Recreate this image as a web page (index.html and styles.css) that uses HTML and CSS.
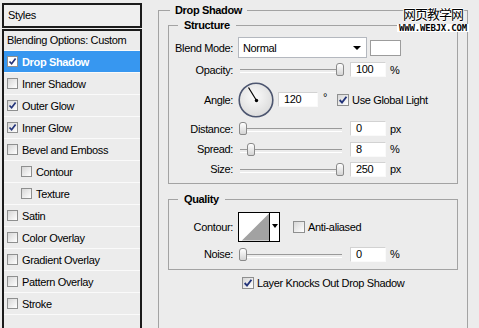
FILE: index.html
```html
<!DOCTYPE html>
<html lang="en-US">
  <head>
    <meta charset='utf-8'>
    <title>Layer Style - Drop Shadow</title>
<link rel="stylesheet" href="styles.css">
</head>
<body>

<div class="window">

  <!-- Style list -->
  <aside class="stylepane">
    <div class="styleshead">Styles</div>
    <ul class="stylelist">
      <li class="blendrow">Blending Options: Custom</li>
      <li class="stylerow selected"><span class="check on"><svg viewBox="0 0 9 9"><path d="M1.5 4.5 L3.6 6.8 L7.6 1.6"/></svg></span>Drop Shadow</li>
      <li class="stylerow"><span class="check"></span>Inner Shadow</li>
      <li class="stylerow"><span class="check on"><svg viewBox="0 0 9 9"><path d="M1.5 4.5 L3.6 6.8 L7.6 1.6"/></svg></span>Outer Glow</li>
      <li class="stylerow"><span class="check on"><svg viewBox="0 0 9 9"><path d="M1.5 4.5 L3.6 6.8 L7.6 1.6"/></svg></span>Inner Glow</li>
      <li class="stylerow"><span class="check"></span>Bevel and Emboss</li>
      <li class="stylerow sub"><span class="check"></span>Contour</li>
      <li class="stylerow sub"><span class="check"></span>Texture</li>
      <li class="stylerow"><span class="check"></span>Satin</li>
      <li class="stylerow"><span class="check"></span>Color Overlay</li>
      <li class="stylerow"><span class="check"></span>Gradient Overlay</li>
      <li class="stylerow"><span class="check"></span>Pattern Overlay</li>
      <li class="stylerow"><span class="check"></span>Stroke</li>
      <li class="stylerow"></li>
    </ul>
  </aside>

  <!-- Options -->
  <section class="options">
    <fieldset class="group outer">
      <legend>Drop Shadow</legend>

      <fieldset class="group structure">
        <legend>Structure</legend>
        <div class="row blend">
          <span class="lbl">Blend Mode:</span>
          <div class="select">Normal<span class="arrow"></span></div>
          <div class="swatch"></div>
        </div>
        <div class="row r-opacity">
          <span class="lbl">Opacity:</span>
          <div class="slider"><span class="thumb" style="left:102px"></span></div>
          <div class="field">100</div><span class="unit">%</span>
        </div>
        <div class="row r-angle">
          <span class="lbl">Angle:</span>
          <svg class="dial" width="36" height="36" viewBox="0 0 36 36">
            <defs>
              <radialGradient id="dialfill" cx="45%" cy="40%" r="60%">
                <stop offset="0" stop-color="#fbfbfb"/>
                <stop offset="1" stop-color="#dcdcdc"/>
              </radialGradient>
            </defs>
            <circle cx="18" cy="18" r="16.8" fill="url(#dialfill)" stroke="#4d5670" stroke-width="1.6"/>
            <line x1="18.5" y1="18.5" x2="10.5" y2="5.5" stroke="#000" stroke-width="1.2"/>
            <circle cx="18.5" cy="18.5" r="1.7" fill="#000"/>
          </svg>
          <div class="field angle">120</div><span class="deg">&deg;</span>
          <span class="check big on"><svg viewBox="0 0 9 9"><path d="M1.5 4.5 L3.6 6.8 L7.6 1.6"/></svg></span>
          <span class="cblabel">Use Global Light</span>
        </div>
        <div class="row r-distance">
          <span class="lbl">Distance:</span>
          <div class="slider"><span class="thumb" style="left:5px"></span></div>
          <div class="field">0</div><span class="unit">px</span>
        </div>
        <div class="row r-spread">
          <span class="lbl">Spread:</span>
          <div class="slider"><span class="thumb" style="left:13px"></span></div>
          <div class="field">8</div><span class="unit">%</span>
        </div>
        <div class="row r-size">
          <span class="lbl">Size:</span>
          <div class="slider"><span class="thumb" style="left:102px"></span></div>
          <div class="field">250</div><span class="unit">px</span>
        </div>
      </fieldset>

      <fieldset class="group quality">
        <legend>Quality</legend>
        <div class="row r-contour">
          <span class="lbl">Contour:</span>
          <div class="contour">
            <svg width="31" height="28" viewBox="0 0 31 28">
              <rect width="31" height="28" fill="#fff"/>
              <polygon points="3,28 31,0 31,28" fill="#a2a2a2"/>
            </svg>
            <span class="carrow"></span>
          </div>
          <span class="check big"></span>
          <span class="cblabel">Anti-aliased</span>
        </div>
        <div class="row r-noise">
          <span class="lbl">Noise:</span>
          <div class="slider"><span class="thumb" style="left:5px"></span></div>
          <div class="field">0</div><span class="unit">%</span>
        </div>
      </fieldset>

      <div class="row r-knock">
        <span class="check big on"><svg viewBox="0 0 9 9"><path d="M1.5 4.5 L3.6 6.8 L7.6 1.6"/></svg></span>
        <span class="cblabel">Layer Knocks Out Drop Shadow</span>
      </div>
    </fieldset>
  </section>

  <div class="watermark">
    <div class="wm-cn">网页教学网</div>
    <div class="wm-url">WWW.WEBJX.COM</div>
  </div>
</div>

</body></html>
```

FILE: styles.css
```css
* {
  box-sizing: border-box;
}

body {
  margin: 0;
  width: 479px;
  height: 328px;
  overflow: hidden;
  background-color: #ececec;
  color: #000000;
  font-family: "Liberation Sans", Arial, sans-serif;
  font-size: 11px;
  letter-spacing: -0.35px;
}

.window {
  position: relative;
  display: flex;
  height: 328px;
}

/* Style list */
.stylepane {
  width: 140px;
  margin: 3px 0 0 2px;
  display: flex;
  flex-direction: column;
}

.styleshead {
  height: 25px;
  border: 2px solid #1b1b1b;
  background-color: #efefef;
  padding-left: 4px;
  line-height: 21px;
}

.stylelist {
  list-style: none;
  margin: 1px 0 0 0;
  padding: 0;
  flex: 1;
  border: 2px solid #1b1b1b;
  border-bottom: none;
  background-color: #f7f7f7;
}

.blendrow {
  height: 20px;
  line-height: 19px;
  padding-left: 3px;
  background-color: #ececec;
  border-bottom: 1px solid #fafafa;
}

.stylerow {
  display: flex;
  align-items: center;
  height: 22px;
  padding-left: 3px;
  background-color: #ececec;
  border-bottom: 1px solid #fafafa;
}

.stylerow.sub {
  padding-left: 17px;
}

.stylerow.selected {
  background-color: #3797f0;
  color: #ffffff;
  font-weight: bold;
}

/* Checkboxes */
.check {
  display: inline-block;
  flex: none;
  width: 11px;
  height: 11px;
  margin-right: 4px;
  border: 1px solid #8e8f8f;
  background: linear-gradient(135deg, #d6d6d6, #ffffff);
}

.check svg {
  display: block;
  width: 9px;
  height: 9px;
}

.check path {
  fill: none;
  stroke: #23347a;
  stroke-width: 1.7;
}

.selected .check {
  background: #ffffff;
}

.check.big {
  width: 12px;
  height: 12px;
  margin-right: 3px;
}

.check.big svg {
  width: 10px;
  height: 10px;
}

/* Options side */
.options {
  margin: 4px 0 0 16px;
  display: flex;
  flex-direction: column;
}

fieldset.group {
  margin: 0;
  padding: 0;
  min-width: 0;
  border: 1px solid #a3a3a3;
}

fieldset.group legend {
  font-weight: bold;
  line-height: 12px;
  padding: 0 5px;
  margin-left: 11px;
}

.outer {
  width: 310px;
  flex: 1;
  margin-bottom: -10px !important;
}

.structure,
.quality {
  margin: 3px 9px 0 9px !important;
}

.structure legend,
.quality legend {
  margin-left: 9px !important;
  padding: 0 6px !important;
}

.structure {
  padding: 6px 0 4px 0 !important;
}

.quality {
  margin-top: 9px !important;
  padding: 7px 0 5px 0 !important;
}

/* Rows */
.row {
  display: flex;
  align-items: center;
  height: 20px;
}

.lbl {
  width: 64px;
  margin-right: 5px;
  text-align: right;
  white-space: nowrap;
}

.blend { height: 21px; }
.r-opacity { height: 23px; }
.r-angle { height: 37px; }
.r-distance { height: 21px; }
.r-contour { height: 30px; }
.r-noise { margin-top: 2px; }

.r-knock {
  height: 18px;
  margin: 4px 0 0 83px;
}

.select {
  position: relative;
  width: 129px;
  height: 21px;
  padding-left: 4px;
  line-height: 20px;
  background-color: #ffffff;
  border: 1px solid #b4b8bf;
}

.arrow {
  position: absolute;
  right: 5px;
  top: 8px;
  border-left: 4px solid transparent;
  border-right: 4px solid transparent;
  border-top: 4px solid #000000;
}

.swatch {
  width: 31px;
  height: 16px;
  margin-left: 3px;
  background-color: #ffffff;
  border: 1px solid #9c9c9c;
}

/* Sliders */
.slider {
  position: relative;
  width: 104px;
  height: 13px;
}

.slider::before {
  content: "";
  position: absolute;
  left: 2px;
  right: 0;
  top: 6px;
  height: 2px;
  border-top: 1px solid #9a9a9a;
  border-bottom: 1px solid #ffffff;
}

.thumb {
  position: absolute;
  top: 0;
  width: 8px;
  height: 13px;
  margin-left: -4px;
  border: 1px solid #8a8a8a;
  border-radius: 3px 3px 2px 2px;
  background: linear-gradient(#ffffff, #d4d4d4);
}

.field {
  width: 36px;
  height: 15px;
  margin-left: 8px;
  padding-left: 5px;
  line-height: 13px;
  background-color: #ffffff;
  border: 1px solid #d2d2d2;
  border-right-color: #fafafa;
  border-bottom-color: #fafafa;
}

.unit {
  margin-left: 4px;
}

.dial {
  display: block;
  flex: none;
}

.field.angle {
  width: 40px;
  margin-left: 4px;
}

.deg {
  margin: -6px 10px 0 5px;
}

.cblabel {
  white-space: nowrap;
}

/* Contour picker */
.contour {
  display: flex;
  width: 42px;
  height: 30px;
  border: 1px solid #000000;
  background-color: #ffffff;
  margin-right: 13px;
}

.contour svg {
  display: block;
  border-right: 1px solid #000000;
  width: 31px;
}

.carrow {
  margin: 11px 0 0 2px;
  width: 0;
  height: 0;
  border-left: 3px solid transparent;
  border-right: 3px solid transparent;
  border-top: 4px solid #000000;
}

/* Watermark */
.watermark {
  position: absolute;
  left: 397px;
  top: 6px;
  width: 72px;
  text-align: center;
  letter-spacing: 0;
}

.wm-cn {
  font-family: "Noto Sans CJK SC", sans-serif;
  font-size: 13px;
  line-height: 16px;
  letter-spacing: -1px;
  color: #000000;
  text-shadow: 1px 0 #fff, -1px 0 #fff, 0 1px #fff, 0 -1px #fff;
}

.wm-url {
  margin-top: 2px;
  font-family: "DejaVu Sans Mono", monospace;
  font-size: 9px;
  font-weight: bold;
  line-height: 8px;
  letter-spacing: -0.2px;
  background-color: #ffffff;
}
```
